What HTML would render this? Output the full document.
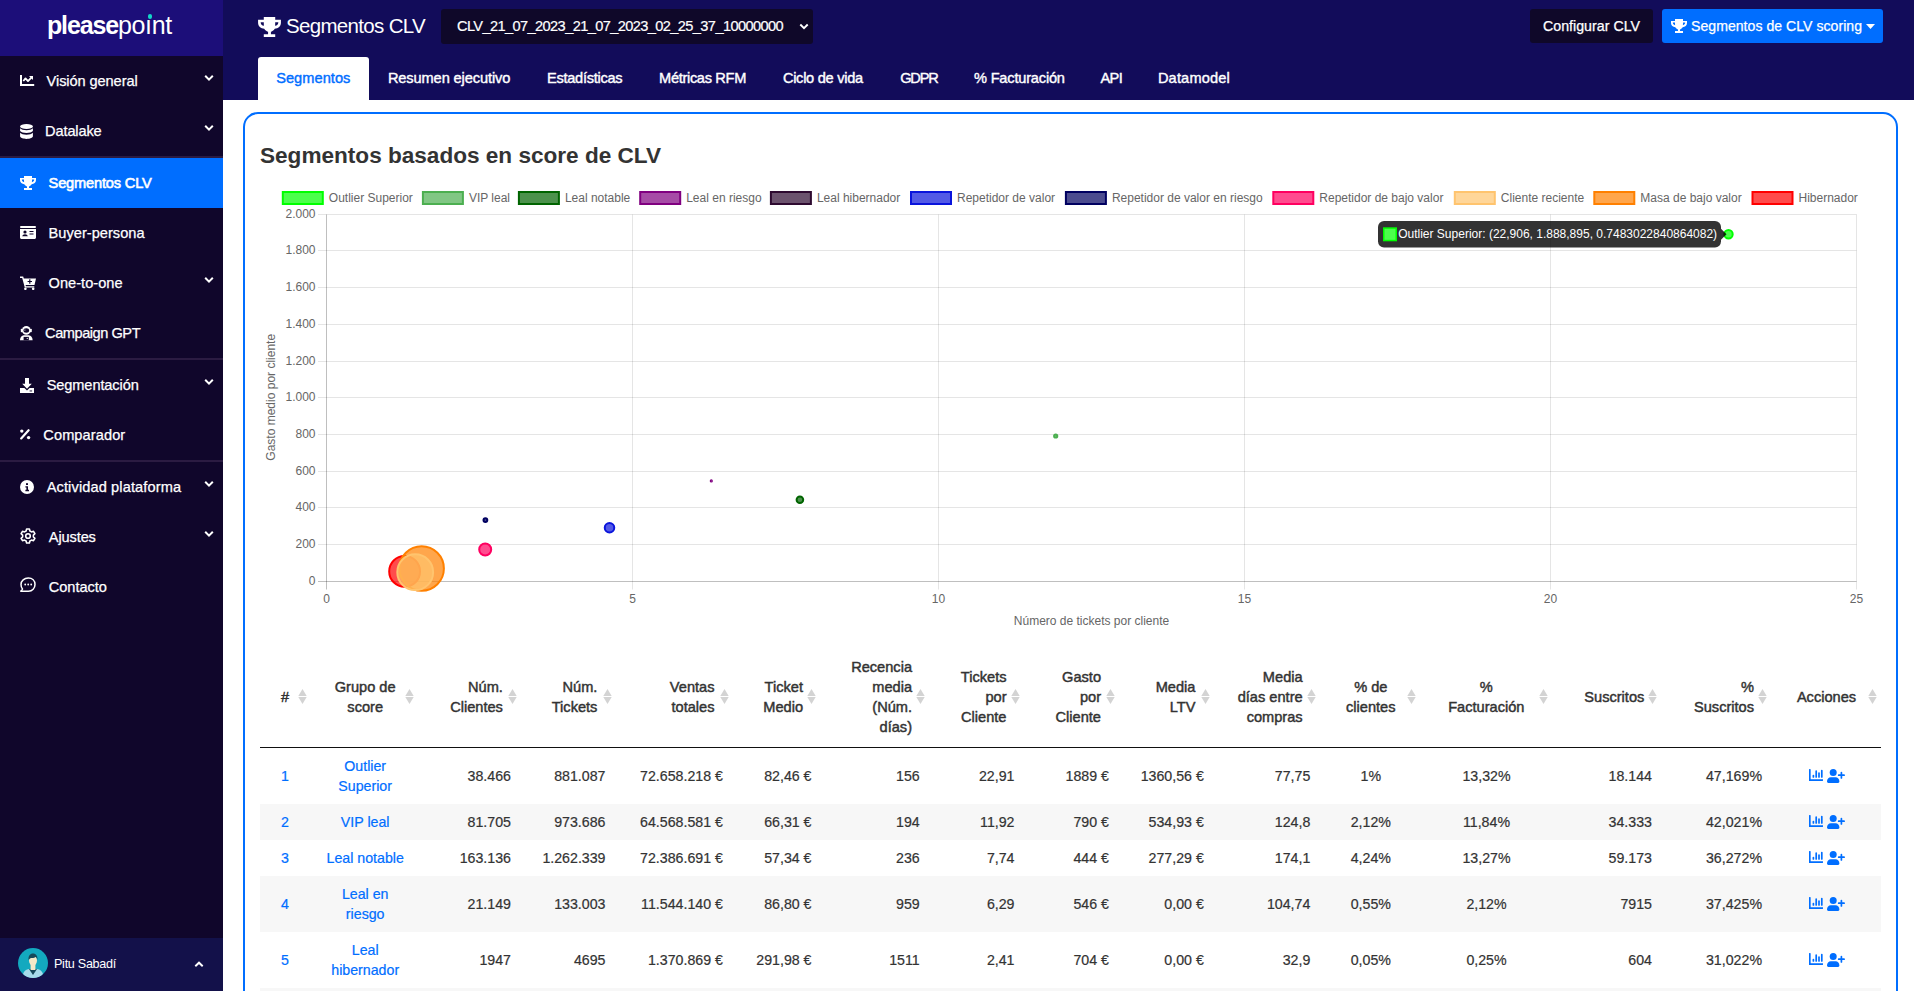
<!DOCTYPE html><html><head><meta charset="utf-8"><title>Segmentos CLV</title><style>
*{box-sizing:border-box;margin:0;padding:0}
html,body{width:1914px;height:991px;overflow:hidden;background:#fff;font-family:"Liberation Sans",sans-serif}
.a{position:absolute;white-space:nowrap}
#sb{position:absolute;left:0;top:0;width:223px;height:991px;background:#10062b}
#logo{position:absolute;left:0;top:0;width:223px;height:56px;background:#1c0e79}
.si{position:absolute;left:0;width:223px;height:50px;color:#fff;font-size:14.6px;-webkit-text-stroke:0.25px currentColor}
.si .t{position:absolute;top:0;line-height:50px;white-space:nowrap}
.si svg{position:absolute}
.chev{position:absolute;left:204px;width:10px;height:8px}
.div{position:absolute;left:0;width:223px;height:2px;background:#2b1b42}
#top{position:absolute;left:223px;top:0;width:1691px;height:100px;background:#120c5a}
.tab{position:absolute;top:57px;height:43px;line-height:43px;color:#fff;font-weight:400;-webkit-text-stroke:0.4px currentColor;font-size:14.6px;white-space:nowrap}
.th{position:absolute;color:#333;font-weight:400;-webkit-text-stroke:0.45px currentColor;font-size:14.6px;line-height:20px;white-space:nowrap}
.td{position:absolute;color:#333;font-size:14.2px;line-height:20px;white-space:nowrap;-webkit-text-stroke:0.2px currentColor}
.r{text-align:right}
.c{text-align:center}
.lk{color:#006eff}
.srt{position:absolute;width:9px;height:15px}
</style></head><body><div id="root" style="position:relative;width:1914px;height:991px;overflow:hidden">
<div id="sb">
<div id="logo"><div class="a" style="left:47px;top:10px;font-size:25px;line-height:30px;color:#fff;font-weight:700;letter-spacing:-1.15px">please</div><div class="a" style="left:118px;top:10px;font-size:25px;line-height:30px;color:#fff;font-weight:400;letter-spacing:-0.35px">po&#305;nt</div><div class="a" style="left:147.5px;top:14.4px;width:4.5px;height:4.5px;border-radius:50%;background:#12d8c8"></div></div>
<div class="si" style="top:56px;">
<svg width="15" height="12" viewBox="0 0 15 12" style="left:20px;top:19px"><path d="M0 0h2v9h12.2v2H0z" fill="#fff"/><path d="M3.3 6l2.2-2.6 2.5 2.7 3.6-3.7" stroke="#fff" stroke-width="1.8" fill="none" stroke-linejoin="round"/><path d="M9 1h4v4z" fill="#fff"/></svg>
<div class="t" style="left:46.6px;;letter-spacing:-0.088px">Visión general</div>
<svg class="chev" viewBox="0 0 10 8" style="top:18px"><path d="M1.2 1.8L5 5.6l3.8-3.8" stroke="#fff" stroke-width="2" fill="none"/></svg>
</div>
<div class="si" style="top:106px;">
<svg width="13" height="15" viewBox="0 0 13 15" style="left:20px;top:17.5px"><ellipse cx="6.5" cy="2.6" rx="6.4" ry="2.5" fill="#fff"/><path d="M0.1 4.2c1 1.3 3.5 2 6.4 2s5.4-.7 6.4-2V7c-1 1.3-3.5 2-6.4 2S1.1 8.3.1 7z" fill="#fff"/><path d="M0.1 8.7c1 1.3 3.5 2 6.4 2s5.4-.7 6.4-2v3.6c0 1.4-2.9 2.6-6.4 2.6S.1 13.7.1 12.3z" fill="#fff"/></svg>
<div class="t" style="left:45.1px;;letter-spacing:-0.139px">Datalake</div>
<svg class="chev" viewBox="0 0 10 8" style="top:18px"><path d="M1.2 1.8L5 5.6l3.8-3.8" stroke="#fff" stroke-width="2" fill="none"/></svg>
</div>
<div class="si" style="top:158px;background:#006eff;">
<svg width="16" height="14" viewBox="0 0 16 14" style="left:20px;top:18px"><path d="M4 0h8v2h4v2c0 2.5-2 4-4.3 4.2C11 9.4 9.6 10.2 9 10.4V12h3v2H4v-2h3v-1.6C6.4 10.2 5 9.4 4.3 8.2 2 8 0 6.5 0 4V2h4z M1.8 3.6c0 1.3.9 2.3 2.3 2.6C4 5.4 4 4.5 4 3.6z M14.2 3.6H12c0 .9 0 1.8-.1 2.6 1.4-.3 2.3-1.3 2.3-2.6z" fill="#fff" fill-rule="evenodd"/></svg>
<div class="t" style="left:48.6px;-webkit-text-stroke:0.6px currentColor;;letter-spacing:-0.168px">Segmentos CLV</div>
</div>
<div class="si" style="top:208px;">
<svg width="16" height="13" viewBox="0 0 16 13" style="left:20px;top:18px"><rect x="0" y="0" width="16" height="2" rx="1" fill="#fff"/><path d="M0 3h16v8.5c0 .8-.7 1.5-1.5 1.5h-13C.7 13 0 12.3 0 11.5z" fill="#fff"/><circle cx="5" cy="6" r="1.6" fill="#10062b"/><path d="M2.2 10.2c.3-1.3 1.4-2 2.8-2s2.5.7 2.8 2z" fill="#10062b"/><rect x="9.5" y="5" width="4" height="1" fill="#10062b"/><rect x="9.5" y="7" width="4" height="2" fill="#10062b" opacity=".5"/></svg>
<div class="t" style="left:48.6px;;letter-spacing:0.020px">Buyer-persona</div>
</div>
<div class="si" style="top:258px;">
<svg width="16" height="14" viewBox="0 0 16 14" style="left:20px;top:17.5px"><path d="M0 0.6h3.2l.6 1.9H16l-1.5 6.6H5.6l.3 1.1h8.4v1.4H4.8L2.2 2H0z" fill="#fff"/><circle cx="5.4" cy="12.8" r="1.3" fill="#fff"/><circle cx="13.2" cy="12.8" r="1.3" fill="#fff"/><path d="M9.2 3.3h1.2v1.6H12v1.2h-1.6v1.6H9.2V6.1H7.6V4.9h1.6z" fill="#10062b"/></svg>
<div class="t" style="left:48.6px;;letter-spacing:0.017px">One-to-one</div>
<svg class="chev" viewBox="0 0 10 8" style="top:18px"><path d="M1.2 1.8L5 5.6l3.8-3.8" stroke="#fff" stroke-width="2" fill="none"/></svg>
</div>
<div class="si" style="top:308px;">
<svg width="13" height="15" viewBox="0 0 13 15" style="left:20px;top:17.5px"><rect x="0.8" y="2.8" width="2" height="3.4" rx="0.8" fill="#fff"/><rect x="9.8" y="2.8" width="2" height="3.4" rx="0.8" fill="#fff"/><circle cx="6.3" cy="4.4" r="4.3" fill="#fff"/><ellipse cx="6.3" cy="4.5" rx="2.8" ry="2.2" fill="#10062b"/><rect x="4.3" y="3.6" width="1.1" height="1" fill="#fff" opacity=".8"/><path d="M0 14.3c0-2.8 1.6-4.8 3.8-5h5c2.2.2 3.8 2.2 3.8 5z" fill="#fff"/><rect x="3.6" y="10.9" width="5.2" height="3.4" fill="#10062b"/><circle cx="7.3" cy="12.4" r=".7" fill="#fff" opacity=".8"/></svg>
<div class="t" style="left:45.1px;;letter-spacing:-0.465px">Campaign GPT</div>
</div>
<div class="si" style="top:360px;">
<svg width="14" height="15" viewBox="0 0 14 15" style="left:20px;top:17.5px"><path d="M5 0h4v5.8h2.8L7 10.8 2.2 5.8H5z" fill="#fff"/><path d="M0 10h4.4L7 12.6 9.6 10H14v5H0z" fill="#fff"/><rect x="9.6" y="12.5" width="2.5" height="0.9" fill="#10062b"/></svg>
<div class="t" style="left:46.7px;;letter-spacing:-0.109px">Segmentación</div>
<svg class="chev" viewBox="0 0 10 8" style="top:18px"><path d="M1.2 1.8L5 5.6l3.8-3.8" stroke="#fff" stroke-width="2" fill="none"/></svg>
</div>
<div class="si" style="top:410px;">
<svg width="11" height="11" viewBox="0 0 11 11" style="left:20px;top:19.3px"><circle cx="1.8" cy="2.1" r="1.7" fill="#fff"/><circle cx="8.6" cy="8.6" r="1.7" fill="#fff"/><path d="M1.2 9.4L8.6 1.2" stroke="#fff" stroke-width="2.2" stroke-linecap="round"/></svg>
<div class="t" style="left:43.3px;;letter-spacing:0.087px">Comparador</div>
</div>
<div class="si" style="top:462px;">
<svg width="14" height="14" viewBox="0 0 14 14" style="left:20px;top:17.7px"><circle cx="7" cy="7" r="7" fill="#fff"/><rect x="6" y="3.2" width="2" height="1.8" fill="#10062b"/><path d="M5.4 6.2h2.6v3.6h1v1.4H5.4V9.8h1V7.6h-1z" fill="#10062b"/></svg>
<div class="t" style="left:46.7px;;letter-spacing:0.113px">Actividad plataforma</div>
<svg class="chev" viewBox="0 0 10 8" style="top:18px"><path d="M1.2 1.8L5 5.6l3.8-3.8" stroke="#fff" stroke-width="2" fill="none"/></svg>
</div>
<div class="si" style="top:512px;">
<svg width="16" height="16" viewBox="0 0 16 16" style="left:20px;top:15.5px"><path d="M6.6 1h2.8l.5 2 1.6.9 2-.6 1.4 2.4-1.5 1.4v1.8l1.5 1.4-1.4 2.4-2-.6-1.6.9-.5 2H6.6l-.5-2-1.6-.9-2 .6L1.1 10.3l1.5-1.4V7.1L1.1 5.7l1.4-2.4 2 .6 1.6-.9z" fill="none" stroke="#fff" stroke-width="1.6" stroke-linejoin="round"/><circle cx="8" cy="8" r="2.3" fill="none" stroke="#fff" stroke-width="1.6"/></svg>
<div class="t" style="left:48.8px;;letter-spacing:-0.123px">Ajustes</div>
<svg class="chev" viewBox="0 0 10 8" style="top:18px"><path d="M1.2 1.8L5 5.6l3.8-3.8" stroke="#fff" stroke-width="2" fill="none"/></svg>
</div>
<div class="si" style="top:562px;">
<svg width="16" height="16" viewBox="0 0 16 16" style="left:20px;top:15.2px"><path d="M8.3 1C12.3 1 15 3.8 15 7.5S12.3 14.3 8.5 14.3H.8l1.7-2.2C1.5 10.9 1 9.3 1 7.5 1 3.8 4.3 1 8.3 1z" fill="none" stroke="#fff" stroke-width="1.5" stroke-linejoin="round"/><circle cx="5.2" cy="7.5" r=".9" fill="#fff"/><circle cx="8.2" cy="7.5" r=".9" fill="#fff"/><circle cx="11.2" cy="7.5" r=".9" fill="#fff"/></svg>
<div class="t" style="left:48.8px;;letter-spacing:-0.053px">Contacto</div>
</div>
<div class="div" style="top:156px"></div>
<div class="div" style="top:358px"></div>
<div class="div" style="top:460px"></div>
<div class="a" style="left:0;top:938px;width:223px;height:53px;background:#13114a"><svg width="30" height="30" viewBox="0 0 30 30" style="position:absolute;left:18px;top:10px"><circle cx="15" cy="15" r="15" fill="#13a9bf"/><path d="M5 26c1-3 3-4.5 6-5h8c3 .5 5 2 6 5-2.5 2.5-6 4-10 4S7.5 28.5 5 26z" fill="#a7dcea"/><path d="M11 21l4 6 4-6z" fill="#164a5a"/><rect x="12.6" y="17" width="4.8" height="5" fill="#f3e9c8"/><ellipse cx="15" cy="12.5" rx="4" ry="5.2" fill="#f3e9c8"/><path d="M10.6 12c-.5-4 1.5-6.5 4.4-6.5s4.9 2.5 4.4 6.5c-.4-2-1.2-2.8-2-3-.9 1-2.6 1.2-4.2 1-.8.2-1.6.7-2.6 2z" fill="#164a5a"/></svg><div class="a" style="left:54px;top:0;line-height:53px;font-size:12.6px;color:#fff;letter-spacing:-0.284px">Pitu Sabadí</div><svg width="10" height="7" viewBox="0 0 10 7" style="position:absolute;left:193.8px;top:23.3px"><path d="M1.3 5.3L5 1.7l3.7 3.6" stroke="#fff" stroke-width="1.9" fill="none"/></svg></div>
</div>
<div id="top">
</div>
<svg width="23" height="20" viewBox="0 0 16 14" style="position:absolute;left:257.8px;top:16.7px"><path d="M4 0h8v2h4v2c0 2.5-2 4-4.3 4.2C11 9.4 9.6 10.2 9 10.4V12h3v2H4v-2h3v-1.6C6.4 10.2 5 9.4 4.3 8.2 2 8 0 6.5 0 4V2h4z M1.8 3.6c0 1.3.9 2.3 2.3 2.6C4 5.4 4 4.5 4 3.6z M14.2 3.6H12c0 .9 0 1.8-.1 2.6 1.4-.3 2.3-1.3 2.3-2.6z" fill="#fff" fill-rule="evenodd"/></svg>
<div class="a" style="left:286px;top:10px;line-height:32px;font-size:20.5px;color:#fff;;letter-spacing:-0.675px">Segmentos CLV</div>
<div class="a" style="left:441px;top:9px;width:372px;height:35px;background:#0f0829;border-radius:3px"></div>
<div class="a" style="left:457px;top:9px;line-height:35px;font-size:14.6px;color:#fff;-webkit-text-stroke:0.2px #fff;letter-spacing:-0.604px">CLV_21_07_2023_21_07_2023_02_25_37_10000000</div>
<svg width="10" height="7" viewBox="0 0 10 7" style="position:absolute;left:799px;top:22.5px"><path d="M1.3 1.5L5 5.2l3.7-3.7" stroke="#fff" stroke-width="1.9" fill="none"/></svg>
<div class="a" style="left:1530px;top:9px;width:123px;height:34px;background:#0f0829;border-radius:3px"></div>
<div class="a" style="left:1543px;top:9px;line-height:34px;font-size:14.2px;color:#fff;-webkit-text-stroke:0.25px #fff;letter-spacing:0.019px">Configurar CLV</div>
<div class="a" style="left:1662px;top:9px;width:221px;height:34px;background:#006eff;border-radius:3px"></div>
<svg width="16" height="14" viewBox="0 0 16 14" style="position:absolute;left:1671px;top:19px"><path d="M4 0h8v2h4v2c0 2.5-2 4-4.3 4.2C11 9.4 9.6 10.2 9 10.4V12h3v2H4v-2h3v-1.6C6.4 10.2 5 9.4 4.3 8.2 2 8 0 6.5 0 4V2h4z M1.8 3.6c0 1.3.9 2.3 2.3 2.6C4 5.4 4 4.5 4 3.6z M14.2 3.6H12c0 .9 0 1.8-.1 2.6 1.4-.3 2.3-1.3 2.3-2.6z" fill="#fff" fill-rule="evenodd"/></svg>
<div class="a" style="left:1691px;top:9px;line-height:34px;font-size:14.1px;color:#fff;-webkit-text-stroke:0.25px #fff;letter-spacing:0.020px">Segmentos de CLV scoring</div>
<svg width="9" height="5" viewBox="0 0 9 5" style="position:absolute;left:1866px;top:24px"><path d="M0 0h9L4.5 5z" fill="#fff"/></svg>
<div class="a" style="left:258px;top:57px;width:111px;height:43px;background:#fff;border-radius:3px 3px 0 0"></div>
<div class="tab" style="left:276.2px;color:#006eff;letter-spacing:0.041px">Segmentos</div>
<div class="tab" style="left:387.9px;color:#fff;letter-spacing:-0.101px">Resumen ejecutivo</div>
<div class="tab" style="left:547px;color:#fff;letter-spacing:-0.282px">Estadísticas</div>
<div class="tab" style="left:659.1px;color:#fff;letter-spacing:-0.326px">Métricas RFM</div>
<div class="tab" style="left:782.9px;color:#fff;letter-spacing:-0.274px">Ciclo de vida</div>
<div class="tab" style="left:900.2px;color:#fff;letter-spacing:-1.193px">GDPR</div>
<div class="tab" style="left:974px;color:#fff;letter-spacing:-0.191px">% Facturación</div>
<div class="tab" style="left:1100.6px;color:#fff;letter-spacing:-0.710px">API</div>
<div class="tab" style="left:1157.9px;color:#fff;letter-spacing:0.169px">Datamodel</div>
<div class="a" style="left:243px;top:112px;width:1655px;height:900px;border:2px solid #006eff;border-radius:15px;background:#fff"></div>
<div class="a" style="left:260px;top:140px;line-height:32px;font-size:22.6px;font-weight:700;color:#333;letter-spacing:-0.011px">Segmentos basados en score de CLV</div><svg width="1914" height="991" viewBox="0 0 1914 991" style="position:absolute;left:0;top:0" font-family="Liberation Sans, sans-serif">
<line x1="318" y1="581.5" x2="1856.5" y2="581.5" stroke="rgba(0,0,0,0.25)" stroke-width="1"/>
<line x1="318" y1="544.5" x2="1856.5" y2="544.5" stroke="rgba(0,0,0,0.1)" stroke-width="1"/>
<line x1="318" y1="507.5" x2="1856.5" y2="507.5" stroke="rgba(0,0,0,0.1)" stroke-width="1"/>
<line x1="318" y1="471.5" x2="1856.5" y2="471.5" stroke="rgba(0,0,0,0.1)" stroke-width="1"/>
<line x1="318" y1="434.5" x2="1856.5" y2="434.5" stroke="rgba(0,0,0,0.1)" stroke-width="1"/>
<line x1="318" y1="397.5" x2="1856.5" y2="397.5" stroke="rgba(0,0,0,0.1)" stroke-width="1"/>
<line x1="318" y1="361.5" x2="1856.5" y2="361.5" stroke="rgba(0,0,0,0.1)" stroke-width="1"/>
<line x1="318" y1="324.5" x2="1856.5" y2="324.5" stroke="rgba(0,0,0,0.1)" stroke-width="1"/>
<line x1="318" y1="287.5" x2="1856.5" y2="287.5" stroke="rgba(0,0,0,0.1)" stroke-width="1"/>
<line x1="318" y1="250.5" x2="1856.5" y2="250.5" stroke="rgba(0,0,0,0.1)" stroke-width="1"/>
<line x1="318" y1="214.5" x2="1856.5" y2="214.5" stroke="rgba(0,0,0,0.1)" stroke-width="1"/>
<line x1="326.5" y1="214.5" x2="326.5" y2="589.5" stroke="rgba(0,0,0,0.25)" stroke-width="1"/>
<line x1="632.5" y1="214.5" x2="632.5" y2="589.5" stroke="rgba(0,0,0,0.1)" stroke-width="1"/>
<line x1="938.5" y1="214.5" x2="938.5" y2="589.5" stroke="rgba(0,0,0,0.1)" stroke-width="1"/>
<line x1="1244.5" y1="214.5" x2="1244.5" y2="589.5" stroke="rgba(0,0,0,0.1)" stroke-width="1"/>
<line x1="1550.5" y1="214.5" x2="1550.5" y2="589.5" stroke="rgba(0,0,0,0.1)" stroke-width="1"/>
<line x1="1856.5" y1="214.5" x2="1856.5" y2="589.5" stroke="rgba(0,0,0,0.1)" stroke-width="1"/>
<text x="315.5" y="585.1" font-size="12" fill="#666" text-anchor="end">0</text>
<text x="315.5" y="548.1" font-size="12" fill="#666" text-anchor="end">200</text>
<text x="315.5" y="511.1" font-size="12" fill="#666" text-anchor="end">400</text>
<text x="315.5" y="475.1" font-size="12" fill="#666" text-anchor="end">600</text>
<text x="315.5" y="438.1" font-size="12" fill="#666" text-anchor="end">800</text>
<text x="315.5" y="401.1" font-size="12" fill="#666" text-anchor="end">1.000</text>
<text x="315.5" y="365.1" font-size="12" fill="#666" text-anchor="end">1.200</text>
<text x="315.5" y="328.1" font-size="12" fill="#666" text-anchor="end">1.400</text>
<text x="315.5" y="291.1" font-size="12" fill="#666" text-anchor="end">1.600</text>
<text x="315.5" y="254.1" font-size="12" fill="#666" text-anchor="end">1.800</text>
<text x="315.5" y="218.1" font-size="12" fill="#666" text-anchor="end">2.000</text>
<text x="326.5" y="603" font-size="12" fill="#666" text-anchor="middle">0</text>
<text x="632.5" y="603" font-size="12" fill="#666" text-anchor="middle">5</text>
<text x="938.5" y="603" font-size="12" fill="#666" text-anchor="middle">10</text>
<text x="1244.5" y="603" font-size="12" fill="#666" text-anchor="middle">15</text>
<text x="1550.5" y="603" font-size="12" fill="#666" text-anchor="middle">20</text>
<text x="1856.5" y="603" font-size="12" fill="#666" text-anchor="middle">25</text>
<text x="1091.5" y="625" font-size="12" fill="#666" text-anchor="middle">Número de tickets por cliente</text>
<text transform="translate(274.5 397.3) rotate(-90)" x="0" y="0" font-size="12" fill="#666" text-anchor="middle">Gasto medio por cliente</text>
<rect x="282.8" y="192" width="40" height="12" fill="rgba(0,255,0,0.7)" stroke="#00ff00" stroke-width="2"/>
<text x="328.8" y="202" font-size="12" fill="#666">Outlier Superior</text>
<rect x="422.9" y="192" width="40" height="12" fill="rgba(76,175,80,0.7)" stroke="#4caf50" stroke-width="2"/>
<text x="468.9" y="202" font-size="12" fill="#666">VIP leal</text>
<rect x="518.9" y="192" width="40" height="12" fill="rgba(0,100,0,0.7)" stroke="#006400" stroke-width="2"/>
<text x="564.9" y="202" font-size="12" fill="#666">Leal notable</text>
<rect x="640.2" y="192" width="40" height="12" fill="rgba(128,0,128,0.7)" stroke="#800080" stroke-width="2"/>
<text x="686.2" y="202" font-size="12" fill="#666">Leal en riesgo</text>
<rect x="770.9" y="192" width="40" height="12" fill="rgba(46,10,48,0.7)" stroke="#2e0a30" stroke-width="2"/>
<text x="816.9" y="202" font-size="12" fill="#666">Leal hibernador</text>
<rect x="911.0" y="192" width="40" height="12" fill="rgba(10,20,220,0.7)" stroke="#0a14dc" stroke-width="2"/>
<text x="957.0" y="202" font-size="12" fill="#666">Repetidor de valor</text>
<rect x="1065.9" y="192" width="40" height="12" fill="rgba(0,0,96,0.7)" stroke="#000060" stroke-width="2"/>
<text x="1111.9" y="202" font-size="12" fill="#666">Repetidor de valor en riesgo</text>
<rect x="1273.3" y="192" width="40" height="12" fill="rgba(255,0,96,0.7)" stroke="#ff0060" stroke-width="2"/>
<text x="1319.3" y="202" font-size="12" fill="#666">Repetidor de bajo valor</text>
<rect x="1454.8" y="192" width="40" height="12" fill="rgba(255,196,110,0.7)" stroke="#ffc46e" stroke-width="2"/>
<text x="1500.8" y="202" font-size="12" fill="#666">Cliente reciente</text>
<rect x="1594.3" y="192" width="40" height="12" fill="rgba(255,128,0,0.7)" stroke="#ff8000" stroke-width="2"/>
<text x="1640.3" y="202" font-size="12" fill="#666">Masa de bajo valor</text>
<rect x="1752.5" y="192" width="40" height="12" fill="rgba(255,0,0,0.7)" stroke="#ff0000" stroke-width="2"/>
<text x="1798.5" y="202" font-size="12" fill="#666">Hibernador</text>
<circle cx="404.6" cy="571.4" r="15.4" fill="rgba(255,0,0,0.7)" stroke="#ff0000" stroke-width="2"/>
<circle cx="421.6" cy="568.5" r="22.3" fill="rgba(255,128,0,0.7)" stroke="#ff8000" stroke-width="2"/>
<circle cx="415.2" cy="572.2" r="17.9" fill="rgba(255,196,110,0.7)" stroke="#ffc46e" stroke-width="2"/>
<circle cx="485.2" cy="549.5" r="6.0" fill="rgba(255,0,96,0.7)" stroke="#ff0060" stroke-width="2"/>
<circle cx="485.4" cy="520.1" r="1.9" fill="rgba(0,0,96,0.7)" stroke="#000060" stroke-width="2"/>
<circle cx="609.5" cy="527.7" r="4.75" fill="rgba(10,20,220,0.7)" stroke="#0a14dc" stroke-width="2"/>
<circle cx="711.3" cy="480.9" r="0.6" fill="rgba(128,0,128,0.7)" stroke="#800080" stroke-width="2"/>
<circle cx="799.9" cy="499.8" r="3.3" fill="rgba(0,100,0,0.7)" stroke="#006400" stroke-width="2"/>
<circle cx="1055.7" cy="436.0" r="1.6" fill="rgba(76,175,80,0.7)" stroke="#4caf50" stroke-width="2"/>
<circle cx="1728.5" cy="234.3" r="4.2" fill="rgba(0,255,0,0.7)" stroke="#00ff00" stroke-width="2"/>
<rect x="1378" y="221" width="343" height="26.5" rx="6" fill="rgba(0,0,0,0.8)"/>
<path d="M1721 228.8L1726.5 234.3 1721 239.8z" fill="rgba(0,0,0,0.8)"/>
<rect x="1383" y="227.3" width="14" height="14" fill="#00ff00"/>
<rect x="1384.5" y="228.8" width="11" height="11" fill="#4cff4c"/>
<text x="1398.2" y="238" font-size="12" fill="#fff">Outlier Superior: (22,906, 1.888,895, 0.7483022840864082)</text>
</svg><div class="a" style="left:260px;top:804px;width:1621px;height:36px;background:#f7f7f7"></div>
<div class="a" style="left:260px;top:876px;width:1621px;height:56px;background:#f7f7f7"></div>
<div class="a" style="left:260px;top:988px;width:1621px;height:36px;background:#f7f7f7"></div>
<div class="a" style="left:260px;top:746.5px;width:1621px;height:1.2px;background:#111"></div>
<div class="th" style="left:281px;top:687px">#</div>
<svg class="srt" viewBox="0 0 9 15" style="left:297.5px;top:689px"><path d="M4.5 0L8.7 6.9H0.3z" fill="#d3d3d3"/><path d="M4.5 15L8.7 8.1H0.3z" fill="#d3d3d3"/></svg>
<div class="th c" style="left:265.2px;width:200px;top:677px">Grupo de<br>score</div>
<svg class="srt" viewBox="0 0 9 15" style="left:405px;top:689px"><path d="M4.5 0L8.7 6.9H0.3z" fill="#d3d3d3"/><path d="M4.5 15L8.7 8.1H0.3z" fill="#d3d3d3"/></svg>
<div class="th r" style="right:1411.1px;top:677px">Núm.<br>Clientes</div>
<svg class="srt" viewBox="0 0 9 15" style="left:507.5px;top:689px"><path d="M4.5 0L8.7 6.9H0.3z" fill="#d3d3d3"/><path d="M4.5 15L8.7 8.1H0.3z" fill="#d3d3d3"/></svg>
<div class="th r" style="right:1316.6px;top:677px">Núm.<br>Tickets</div>
<svg class="srt" viewBox="0 0 9 15" style="left:602.6px;top:689px"><path d="M4.5 0L8.7 6.9H0.3z" fill="#d3d3d3"/><path d="M4.5 15L8.7 8.1H0.3z" fill="#d3d3d3"/></svg>
<div class="th r" style="right:1199.5px;top:677px">Ventas<br>totales</div>
<svg class="srt" viewBox="0 0 9 15" style="left:719.5px;top:689px"><path d="M4.5 0L8.7 6.9H0.3z" fill="#d3d3d3"/><path d="M4.5 15L8.7 8.1H0.3z" fill="#d3d3d3"/></svg>
<div class="th r" style="right:1111px;top:677px">Ticket<br>Medio</div>
<svg class="srt" viewBox="0 0 9 15" style="left:807.3px;top:689px"><path d="M4.5 0L8.7 6.9H0.3z" fill="#d3d3d3"/><path d="M4.5 15L8.7 8.1H0.3z" fill="#d3d3d3"/></svg>
<div class="th r" style="right:1002px;top:657px">Recencia<br>media<br>(Núm.<br>días)</div>
<svg class="srt" viewBox="0 0 9 15" style="left:916.3px;top:689px"><path d="M4.5 0L8.7 6.9H0.3z" fill="#d3d3d3"/><path d="M4.5 15L8.7 8.1H0.3z" fill="#d3d3d3"/></svg>
<div class="th r" style="right:907.5px;top:667px">Tickets<br>por<br>Cliente</div>
<svg class="srt" viewBox="0 0 9 15" style="left:1011px;top:689px"><path d="M4.5 0L8.7 6.9H0.3z" fill="#d3d3d3"/><path d="M4.5 15L8.7 8.1H0.3z" fill="#d3d3d3"/></svg>
<div class="th r" style="right:813px;top:667px">Gasto<br>por<br>Cliente</div>
<svg class="srt" viewBox="0 0 9 15" style="left:1105.5px;top:689px"><path d="M4.5 0L8.7 6.9H0.3z" fill="#d3d3d3"/><path d="M4.5 15L8.7 8.1H0.3z" fill="#d3d3d3"/></svg>
<div class="th r" style="right:718.5999999999999px;top:677px">Media<br>LTV</div>
<svg class="srt" viewBox="0 0 9 15" style="left:1200.6px;top:689px"><path d="M4.5 0L8.7 6.9H0.3z" fill="#d3d3d3"/><path d="M4.5 15L8.7 8.1H0.3z" fill="#d3d3d3"/></svg>
<div class="th r" style="right:611.4000000000001px;top:667px">Media<br>días entre<br>compras</div>
<svg class="srt" viewBox="0 0 9 15" style="left:1307.2px;top:689px"><path d="M4.5 0L8.7 6.9H0.3z" fill="#d3d3d3"/><path d="M4.5 15L8.7 8.1H0.3z" fill="#d3d3d3"/></svg>
<div class="th c" style="left:1270.8px;width:200px;top:677px">% de<br>clientes</div>
<svg class="srt" viewBox="0 0 9 15" style="left:1407px;top:689px"><path d="M4.5 0L8.7 6.9H0.3z" fill="#d3d3d3"/><path d="M4.5 15L8.7 8.1H0.3z" fill="#d3d3d3"/></svg>
<div class="th c" style="left:1386.3px;width:200px;top:677px">%<br>Facturación</div>
<svg class="srt" viewBox="0 0 9 15" style="left:1538.5px;top:689px"><path d="M4.5 0L8.7 6.9H0.3z" fill="#d3d3d3"/><path d="M4.5 15L8.7 8.1H0.3z" fill="#d3d3d3"/></svg>
<div class="th r" style="right:269.70000000000005px;top:687px">Suscritos</div>
<svg class="srt" viewBox="0 0 9 15" style="left:1648px;top:689px"><path d="M4.5 0L8.7 6.9H0.3z" fill="#d3d3d3"/><path d="M4.5 15L8.7 8.1H0.3z" fill="#d3d3d3"/></svg>
<div class="th r" style="right:160px;top:677px">%<br>Suscritos</div>
<svg class="srt" viewBox="0 0 9 15" style="left:1758px;top:689px"><path d="M4.5 0L8.7 6.9H0.3z" fill="#d3d3d3"/><path d="M4.5 15L8.7 8.1H0.3z" fill="#d3d3d3"/></svg>
<div class="th c" style="left:1726.5px;width:200px;top:687px">Acciones</div>
<svg class="srt" viewBox="0 0 9 15" style="left:1867.6px;top:689px"><path d="M4.5 0L8.7 6.9H0.3z" fill="#d3d3d3"/><path d="M4.5 15L8.7 8.1H0.3z" fill="#d3d3d3"/></svg>
<div class="td c lk" style="left:265px;width:40px;top:766.0px">1</div>
<div class="td c lk" style="left:285.2px;width:160px;top:756.0px">Outlier<br>Superior</div>
<div class="td r" style="right:1403px;top:766.0px">38.466</div>
<div class="td r" style="right:1308.5px;top:766.0px">881.087</div>
<div class="td r" style="right:1191.1px;top:766.0px">72.658.218 €</div>
<div class="td r" style="right:1102.5px;top:766.0px">82,46 €</div>
<div class="td r" style="right:994.3px;top:766.0px">156</div>
<div class="td r" style="right:899.5px;top:766.0px">22,91</div>
<div class="td r" style="right:805px;top:766.0px">1889 €</div>
<div class="td r" style="right:710.2px;top:766.0px">1360,56 €</div>
<div class="td r" style="right:603.7px;top:766.0px">77,75</div>
<div class="td c" style="left:1290.8px;width:160px;top:766.0px">1%</div>
<div class="td c" style="left:1406.5px;width:160px;top:766.0px">13,32%</div>
<div class="td r" style="right:262px;top:766.0px">18.144</div>
<div class="td r" style="right:152px;top:766.0px">47,169%</div>
<svg width="14" height="12" viewBox="0 0 14 12" style="position:absolute;left:1809px;top:768.7px"><path d="M0.8 0.8v10.3h12.7" stroke="#006eff" stroke-width="1.7" stroke-linecap="round" fill="none"/><path d="M4.4 6.6v1.3M7.2 2.2v5.7M10 4v3.9M12.8 1.6v6.3" stroke="#006eff" stroke-width="1.7" stroke-linecap="round" fill="none"/></svg>
<svg width="18" height="14" viewBox="0 0 18 14" style="position:absolute;left:1827px;top:768.8px"><circle cx="6.2" cy="3.5" r="3.5" fill="#006eff"/><path d="M0 12.6c0-2.6 1.7-4.4 3.8-4.4h4.8c2.1 0 3.8 1.8 3.8 4.4 0 .8-.6 1.4-1.3 1.4H1.3C.6 14 0 13.4 0 12.6z" fill="#006eff"/><path d="M14.4 3.5v5.4M11.7 6.2h5.4" stroke="#006eff" stroke-width="1.7" stroke-linecap="round"/></svg>
<div class="td c lk" style="left:265px;width:40px;top:812.0px">2</div>
<div class="td c lk" style="left:285.2px;width:160px;top:812.0px">VIP leal</div>
<div class="td r" style="right:1403px;top:812.0px">81.705</div>
<div class="td r" style="right:1308.5px;top:812.0px">973.686</div>
<div class="td r" style="right:1191.1px;top:812.0px">64.568.581 €</div>
<div class="td r" style="right:1102.5px;top:812.0px">66,31 €</div>
<div class="td r" style="right:994.3px;top:812.0px">194</div>
<div class="td r" style="right:899.5px;top:812.0px">11,92</div>
<div class="td r" style="right:805px;top:812.0px">790 €</div>
<div class="td r" style="right:710.2px;top:812.0px">534,93 €</div>
<div class="td r" style="right:603.7px;top:812.0px">124,8</div>
<div class="td c" style="left:1290.8px;width:160px;top:812.0px">2,12%</div>
<div class="td c" style="left:1406.5px;width:160px;top:812.0px">11,84%</div>
<div class="td r" style="right:262px;top:812.0px">34.333</div>
<div class="td r" style="right:152px;top:812.0px">42,021%</div>
<svg width="14" height="12" viewBox="0 0 14 12" style="position:absolute;left:1809px;top:814.7px"><path d="M0.8 0.8v10.3h12.7" stroke="#006eff" stroke-width="1.7" stroke-linecap="round" fill="none"/><path d="M4.4 6.6v1.3M7.2 2.2v5.7M10 4v3.9M12.8 1.6v6.3" stroke="#006eff" stroke-width="1.7" stroke-linecap="round" fill="none"/></svg>
<svg width="18" height="14" viewBox="0 0 18 14" style="position:absolute;left:1827px;top:814.8px"><circle cx="6.2" cy="3.5" r="3.5" fill="#006eff"/><path d="M0 12.6c0-2.6 1.7-4.4 3.8-4.4h4.8c2.1 0 3.8 1.8 3.8 4.4 0 .8-.6 1.4-1.3 1.4H1.3C.6 14 0 13.4 0 12.6z" fill="#006eff"/><path d="M14.4 3.5v5.4M11.7 6.2h5.4" stroke="#006eff" stroke-width="1.7" stroke-linecap="round"/></svg>
<div class="td c lk" style="left:265px;width:40px;top:848.0px">3</div>
<div class="td c lk" style="left:285.2px;width:160px;top:848.0px">Leal notable</div>
<div class="td r" style="right:1403px;top:848.0px">163.136</div>
<div class="td r" style="right:1308.5px;top:848.0px">1.262.339</div>
<div class="td r" style="right:1191.1px;top:848.0px">72.386.691 €</div>
<div class="td r" style="right:1102.5px;top:848.0px">57,34 €</div>
<div class="td r" style="right:994.3px;top:848.0px">236</div>
<div class="td r" style="right:899.5px;top:848.0px">7,74</div>
<div class="td r" style="right:805px;top:848.0px">444 €</div>
<div class="td r" style="right:710.2px;top:848.0px">277,29 €</div>
<div class="td r" style="right:603.7px;top:848.0px">174,1</div>
<div class="td c" style="left:1290.8px;width:160px;top:848.0px">4,24%</div>
<div class="td c" style="left:1406.5px;width:160px;top:848.0px">13,27%</div>
<div class="td r" style="right:262px;top:848.0px">59.173</div>
<div class="td r" style="right:152px;top:848.0px">36,272%</div>
<svg width="14" height="12" viewBox="0 0 14 12" style="position:absolute;left:1809px;top:850.7px"><path d="M0.8 0.8v10.3h12.7" stroke="#006eff" stroke-width="1.7" stroke-linecap="round" fill="none"/><path d="M4.4 6.6v1.3M7.2 2.2v5.7M10 4v3.9M12.8 1.6v6.3" stroke="#006eff" stroke-width="1.7" stroke-linecap="round" fill="none"/></svg>
<svg width="18" height="14" viewBox="0 0 18 14" style="position:absolute;left:1827px;top:850.8px"><circle cx="6.2" cy="3.5" r="3.5" fill="#006eff"/><path d="M0 12.6c0-2.6 1.7-4.4 3.8-4.4h4.8c2.1 0 3.8 1.8 3.8 4.4 0 .8-.6 1.4-1.3 1.4H1.3C.6 14 0 13.4 0 12.6z" fill="#006eff"/><path d="M14.4 3.5v5.4M11.7 6.2h5.4" stroke="#006eff" stroke-width="1.7" stroke-linecap="round"/></svg>
<div class="td c lk" style="left:265px;width:40px;top:894.0px">4</div>
<div class="td c lk" style="left:285.2px;width:160px;top:884.0px">Leal en<br>riesgo</div>
<div class="td r" style="right:1403px;top:894.0px">21.149</div>
<div class="td r" style="right:1308.5px;top:894.0px">133.003</div>
<div class="td r" style="right:1191.1px;top:894.0px">11.544.140 €</div>
<div class="td r" style="right:1102.5px;top:894.0px">86,80 €</div>
<div class="td r" style="right:994.3px;top:894.0px">959</div>
<div class="td r" style="right:899.5px;top:894.0px">6,29</div>
<div class="td r" style="right:805px;top:894.0px">546 €</div>
<div class="td r" style="right:710.2px;top:894.0px">0,00 €</div>
<div class="td r" style="right:603.7px;top:894.0px">104,74</div>
<div class="td c" style="left:1290.8px;width:160px;top:894.0px">0,55%</div>
<div class="td c" style="left:1406.5px;width:160px;top:894.0px">2,12%</div>
<div class="td r" style="right:262px;top:894.0px">7915</div>
<div class="td r" style="right:152px;top:894.0px">37,425%</div>
<svg width="14" height="12" viewBox="0 0 14 12" style="position:absolute;left:1809px;top:896.7px"><path d="M0.8 0.8v10.3h12.7" stroke="#006eff" stroke-width="1.7" stroke-linecap="round" fill="none"/><path d="M4.4 6.6v1.3M7.2 2.2v5.7M10 4v3.9M12.8 1.6v6.3" stroke="#006eff" stroke-width="1.7" stroke-linecap="round" fill="none"/></svg>
<svg width="18" height="14" viewBox="0 0 18 14" style="position:absolute;left:1827px;top:896.8px"><circle cx="6.2" cy="3.5" r="3.5" fill="#006eff"/><path d="M0 12.6c0-2.6 1.7-4.4 3.8-4.4h4.8c2.1 0 3.8 1.8 3.8 4.4 0 .8-.6 1.4-1.3 1.4H1.3C.6 14 0 13.4 0 12.6z" fill="#006eff"/><path d="M14.4 3.5v5.4M11.7 6.2h5.4" stroke="#006eff" stroke-width="1.7" stroke-linecap="round"/></svg>
<div class="td c lk" style="left:265px;width:40px;top:950.0px">5</div>
<div class="td c lk" style="left:285.2px;width:160px;top:940.0px">Leal<br>hibernador</div>
<div class="td r" style="right:1403px;top:950.0px">1947</div>
<div class="td r" style="right:1308.5px;top:950.0px">4695</div>
<div class="td r" style="right:1191.1px;top:950.0px">1.370.869 €</div>
<div class="td r" style="right:1102.5px;top:950.0px">291,98 €</div>
<div class="td r" style="right:994.3px;top:950.0px">1511</div>
<div class="td r" style="right:899.5px;top:950.0px">2,41</div>
<div class="td r" style="right:805px;top:950.0px">704 €</div>
<div class="td r" style="right:710.2px;top:950.0px">0,00 €</div>
<div class="td r" style="right:603.7px;top:950.0px">32,9</div>
<div class="td c" style="left:1290.8px;width:160px;top:950.0px">0,05%</div>
<div class="td c" style="left:1406.5px;width:160px;top:950.0px">0,25%</div>
<div class="td r" style="right:262px;top:950.0px">604</div>
<div class="td r" style="right:152px;top:950.0px">31,022%</div>
<svg width="14" height="12" viewBox="0 0 14 12" style="position:absolute;left:1809px;top:952.7px"><path d="M0.8 0.8v10.3h12.7" stroke="#006eff" stroke-width="1.7" stroke-linecap="round" fill="none"/><path d="M4.4 6.6v1.3M7.2 2.2v5.7M10 4v3.9M12.8 1.6v6.3" stroke="#006eff" stroke-width="1.7" stroke-linecap="round" fill="none"/></svg>
<svg width="18" height="14" viewBox="0 0 18 14" style="position:absolute;left:1827px;top:952.8px"><circle cx="6.2" cy="3.5" r="3.5" fill="#006eff"/><path d="M0 12.6c0-2.6 1.7-4.4 3.8-4.4h4.8c2.1 0 3.8 1.8 3.8 4.4 0 .8-.6 1.4-1.3 1.4H1.3C.6 14 0 13.4 0 12.6z" fill="#006eff"/><path d="M14.4 3.5v5.4M11.7 6.2h5.4" stroke="#006eff" stroke-width="1.7" stroke-linecap="round"/></svg>
</div></body></html>
